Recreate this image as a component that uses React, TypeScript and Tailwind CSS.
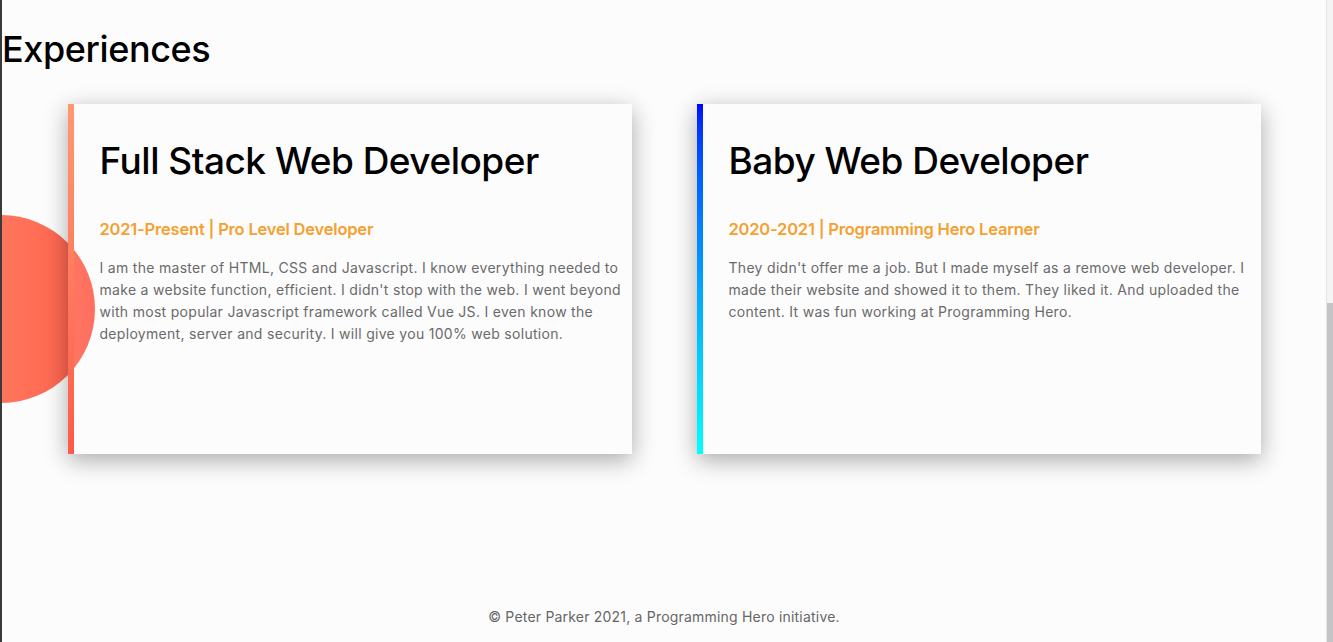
const experiences = [
  {
    id: 1,
    title: "Full Stack Web Developer",
    meta: "2021-Present | Pro Level Developer",
    text: "I am the master of HTML, CSS and Javascript. I know everything needed to make a website function, efficient. I didn't stop with the web. I went beyond with most popular Javascript framework called Vue JS. I even know the deployment, server and security. I will give you 100% web solution.",
    bar: "bg-gradient-to-b from-[#ff9872] to-[#ff5a45]",
  },
  {
    id: 2,
    title: "Baby Web Developer",
    meta: "2020-2021 | Programming Hero Learner",
    text: "They didn't offer me a job. But I made myself as a remove web developer. I made their website and showed it to them. They liked it. And uploaded the content. It was fun working at Programming Hero.",
    bar: "bg-gradient-to-b from-[#0000ff] to-[#00ffff]",
  },
];

const App = () => {
  return (
    <div className="h-[642px] w-full flex bg-[#fcfcfd] border-l-2 border-[#3a3a3a] font-['Inter',sans-serif] overflow-hidden">
      <div className="relative flex-1 flex flex-col">
        {/* decorative blob */}
        <div className="absolute left-[-95px] top-[215px] w-[188px] h-[188px] rounded-full bg-gradient-to-r from-[#ff8a6a] to-[#ff5f4c]" />

        <h2 className="pt-[31px] text-[36px] leading-none font-medium text-black tracking-[-0.4px]">
          Experiences
        </h2>

        <div className="mt-[37px] flex justify-center gap-[65px]">
          {experiences.map((exp) => (
            <div
              key={exp.id}
              className="relative w-[564px] h-[350px] flex bg-white/10 shadow-[0_6px_22px_rgba(0,0,0,0.33)]"
            >
              <div className={`w-[6px] shrink-0 ${exp.bar}`} />
              <div className="flex-1 pl-[26px] pr-[10px] pt-[38px]">
                <h3 className="text-[37px] leading-none font-medium text-black tracking-[-0.5px]">
                  {exp.title}
                </h3>
                <p className="mt-[42px] text-[16.5px] leading-none font-semibold text-[#f5a030] tracking-[-0.2px]">
                  {exp.meta}
                </p>
                <p className="mt-[19px] text-[14px] leading-[22px] text-[#6a6a6a] tracking-[0.3px]">
                  {exp.text}
                </p>
              </div>
            </div>
          ))}
        </div>

        <footer className="mt-auto pb-[15px] text-center text-[14px] text-[#666] tracking-[0.2px]">
          © Peter Parker 2021, a Programming Hero initiative.
        </footer>
      </div>

      {/* scrollbar */}
      <div className="w-[7px] flex flex-col bg-[#f4f4f5] border-l border-[#e4e4e4]">
        <div className="h-[303px]" />
        <div className="flex-1 bg-[#c4c4c6]" />
      </div>
    </div>
  );
};

export default App;
